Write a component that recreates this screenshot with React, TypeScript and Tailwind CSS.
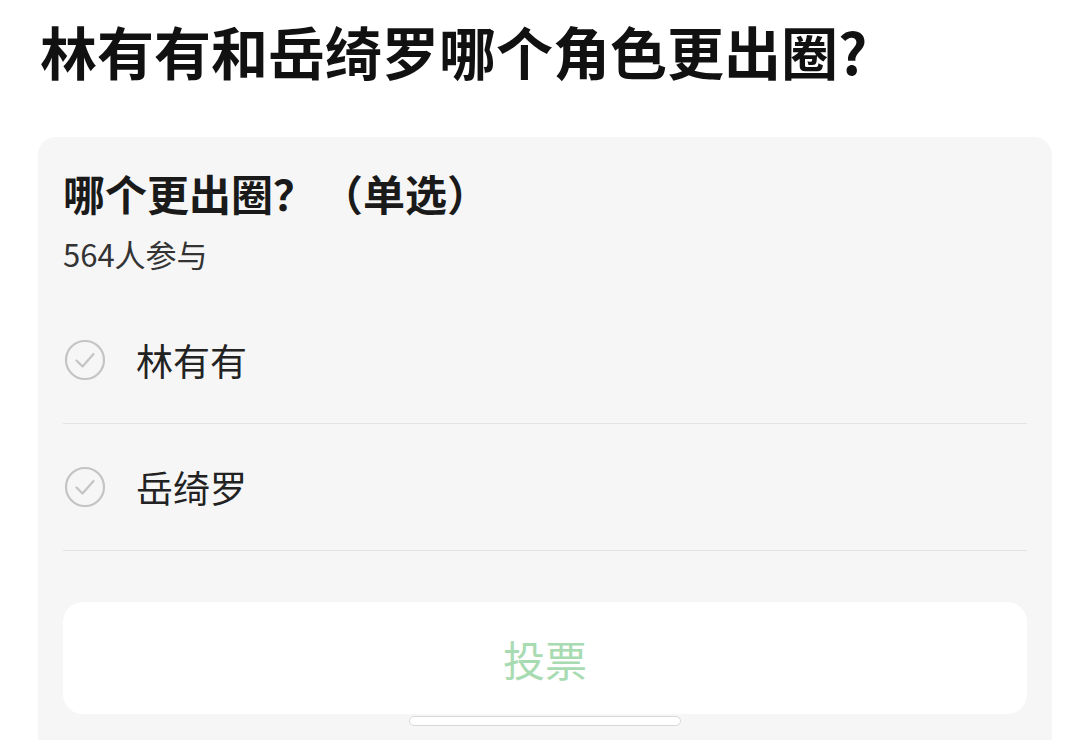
const cjk = { fontFamily: '"Noto Sans CJK SC", "Noto Sans", sans-serif' };

function CheckCircle() {
  return (
    <svg width="42" height="42" viewBox="0 0 42 42" fill="none">
      <circle cx="21" cy="21" r="19" stroke="#c4c4c4" strokeWidth="2.2" />
      <path d="M12.5 21.5 L18.5 27.5 L29.5 15" stroke="#c4c4c4" strokeWidth="2.2" strokeLinecap="round" strokeLinejoin="round" />
    </svg>
  );
}

function Option({ label }: { label: string }) {
  return (
    <div className="flex items-center h-[127px] border-b border-[#e3e3e3] pl-[1px]">
      <CheckCircle />
      <span className="ml-[30px] text-[37px] text-[#222] leading-none">{label}</span>
    </div>
  );
}

export default function App() {
  return (
    <div className="w-[1090px] h-[740px] bg-white overflow-hidden" style={cjk}>
      <h1 className="pl-[40px] pt-[17px] text-[57px] leading-[66px] font-bold text-[#111]">
        林有有和岳绮罗哪个角色更出圈?
      </h1>

      <div className="mx-[38px] mt-[54px] rounded-[18px] bg-[#f6f6f6] px-[25px] pt-[28px] h-[620px]">
        <div className="text-[42px] font-bold text-[#1a1a1a] leading-[56px]">
          哪个更出圈？<span className="ml-[6px]">（单选）</span>
        </div>
        <div className="mt-[12px] text-[31px] text-[#333] leading-[42px]">564人参与</div>

        <div className="mt-[22px]">
          <Option label="林有有" />
          <Option label="岳绮罗" />
        </div>

        <button className="mt-[51px] w-full h-[112px] rounded-[20px] bg-white text-[42px] text-[#a9dbb3] flex items-center justify-center">
          投票
        </button>

        <div className="mx-auto mt-[2px] w-[272px] h-[10px] rounded-full border border-[#d8d8d8] bg-white" />
      </div>
    </div>
  );
}
